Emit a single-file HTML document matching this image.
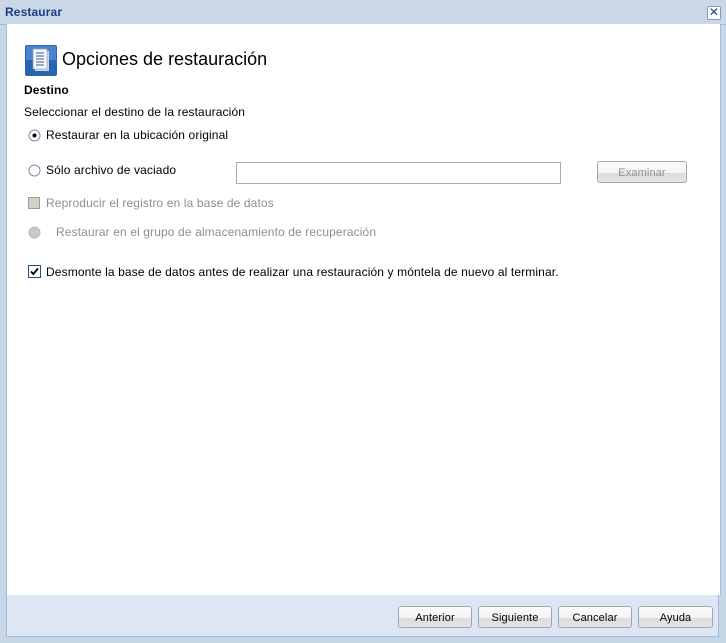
<!DOCTYPE html><html><head><style>
body{margin:0;width:726px;height:643px;background:#c8d7e8;font-family:"Liberation Sans",sans-serif;font-size:12px;position:relative;overflow:hidden;color:#000;letter-spacing:0.12px}
.a{position:absolute;white-space:nowrap}
.btn{position:absolute;height:22px;border:1px solid #a0a8b4;border-radius:3px;background:linear-gradient(#fafafa 0,#f4f4f4 55%,#dcdcdc 56%,#e4e4e4 100%);text-align:center;line-height:22px;font-size:11px;box-sizing:border-box}
.g{color:#8e8e8e}
</style></head><body>
<div class="a" style="left:0;top:0;width:726px;height:24px;background:#c9d7e7;border-bottom:1px solid #9fbbdf"></div>
<div class="a" style="left:5px;top:5px;font-weight:bold;color:#1b3f85;font-size:12px">Restaurar</div>
<div class="a" style="left:707px;top:6px;width:12px;height:12px;border:1px solid #7c9cc8;background:#fff;border-radius:2px;color:#1b3f85;font-size:12px;line-height:11px;text-align:center">✕</div>
<div class="a" style="left:6px;top:24px;width:713px;height:571px;background:#fff;border-left:1px solid #9fbbdf;border-right:1px solid #9fbbdf"></div>
<div class="a" style="left:6px;top:595px;width:713px;height:42px;background:#dde6f2;border:1px solid #9fbbdf;border-top:none;box-sizing:border-box"></div>
<svg class="a" style="left:25px;top:45px" width="32" height="31"><rect width="32" height="31" rx="2" fill="#2a63b0"/><rect x="1" y="1" width="30" height="14" fill="#4a86cf"/><rect x="10" y="6" width="14" height="20" fill="#c9d4e6"/><rect x="8" y="4" width="14" height="20" fill="#f4f6fa" stroke="#8a9ab4" stroke-width=".6"/><g stroke="#3d5f95" stroke-width="1"><line x1="11" y1="8" x2="19" y2="8"/><line x1="11" y1="11" x2="19" y2="11"/><line x1="11" y1="14" x2="19" y2="14"/><line x1="11" y1="17" x2="19" y2="17"/><line x1="11" y1="20" x2="19" y2="20"/></g></svg>
<div class="a" style="left:62px;top:49px;font-size:18px;letter-spacing:0">Opciones de restauración</div>
<div class="a" style="left:24px;top:83px;font-weight:bold">Destino</div>
<div class="a" style="left:24px;top:105px">Seleccionar el destino de la restauración</div>
<svg class="a" style="left:28px;top:129px" width="13" height="13"><circle cx="6.5" cy="6.5" r="5.5" fill="#fff" stroke="#7a8fa6"/><circle cx="6.5" cy="6.5" r="2" fill="#000"/></svg>
<div class="a" style="left:46px;top:128px">Restaurar en la ubicación original</div>
<svg class="a" style="left:28px;top:164px" width="13" height="13"><circle cx="6.5" cy="6.5" r="5.5" fill="#fff" stroke="#7a8fa6"/></svg>
<div class="a" style="left:46px;top:163px">Sólo archivo de vaciado</div>
<div class="a" style="left:236px;top:162px;width:325px;height:22px;border:1px solid #a5acb5;box-sizing:border-box"></div>
<div class="btn g" style="left:597px;top:161px;width:90px;height:22px">Examinar</div>
<div class="a" style="left:28px;top:197px;width:12px;height:12px;background:#d4d0c8;border:1px solid #9c9c9c;box-sizing:border-box"></div>
<div class="a g" style="left:46px;top:196px">Reproducir el registro en la base de datos</div>
<svg class="a" style="left:28px;top:226px" width="13" height="13"><circle cx="6.5" cy="6.5" r="5.5" fill="#ccc9c2" stroke="#bbb"/></svg>
<div class="a g" style="left:56px;top:225px">Restaurar en el grupo de almacenamiento de recuperación</div>
<svg class="a" style="left:28px;top:265px" width="13" height="13"><rect x=".5" y=".5" width="12" height="12" fill="#fff" stroke="#1c5180"/><path d="M3 6.5l2.3 2.5L10 3.5" stroke="#000" stroke-width="1.8" fill="none"/></svg>
<div class="a" style="left:46px;top:265px">Desmonte la base de datos antes de realizar una restauración y móntela de nuevo al terminar.</div>
<div class="btn" style="left:398px;top:606px;width:74px">Anterior</div>
<div class="btn" style="left:478px;top:606px;width:74px">Siguiente</div>
<div class="btn" style="left:558px;top:606px;width:74px">Cancelar</div>
<div class="btn" style="left:638px;top:606px;width:75px">Ayuda</div>
</body></html>
